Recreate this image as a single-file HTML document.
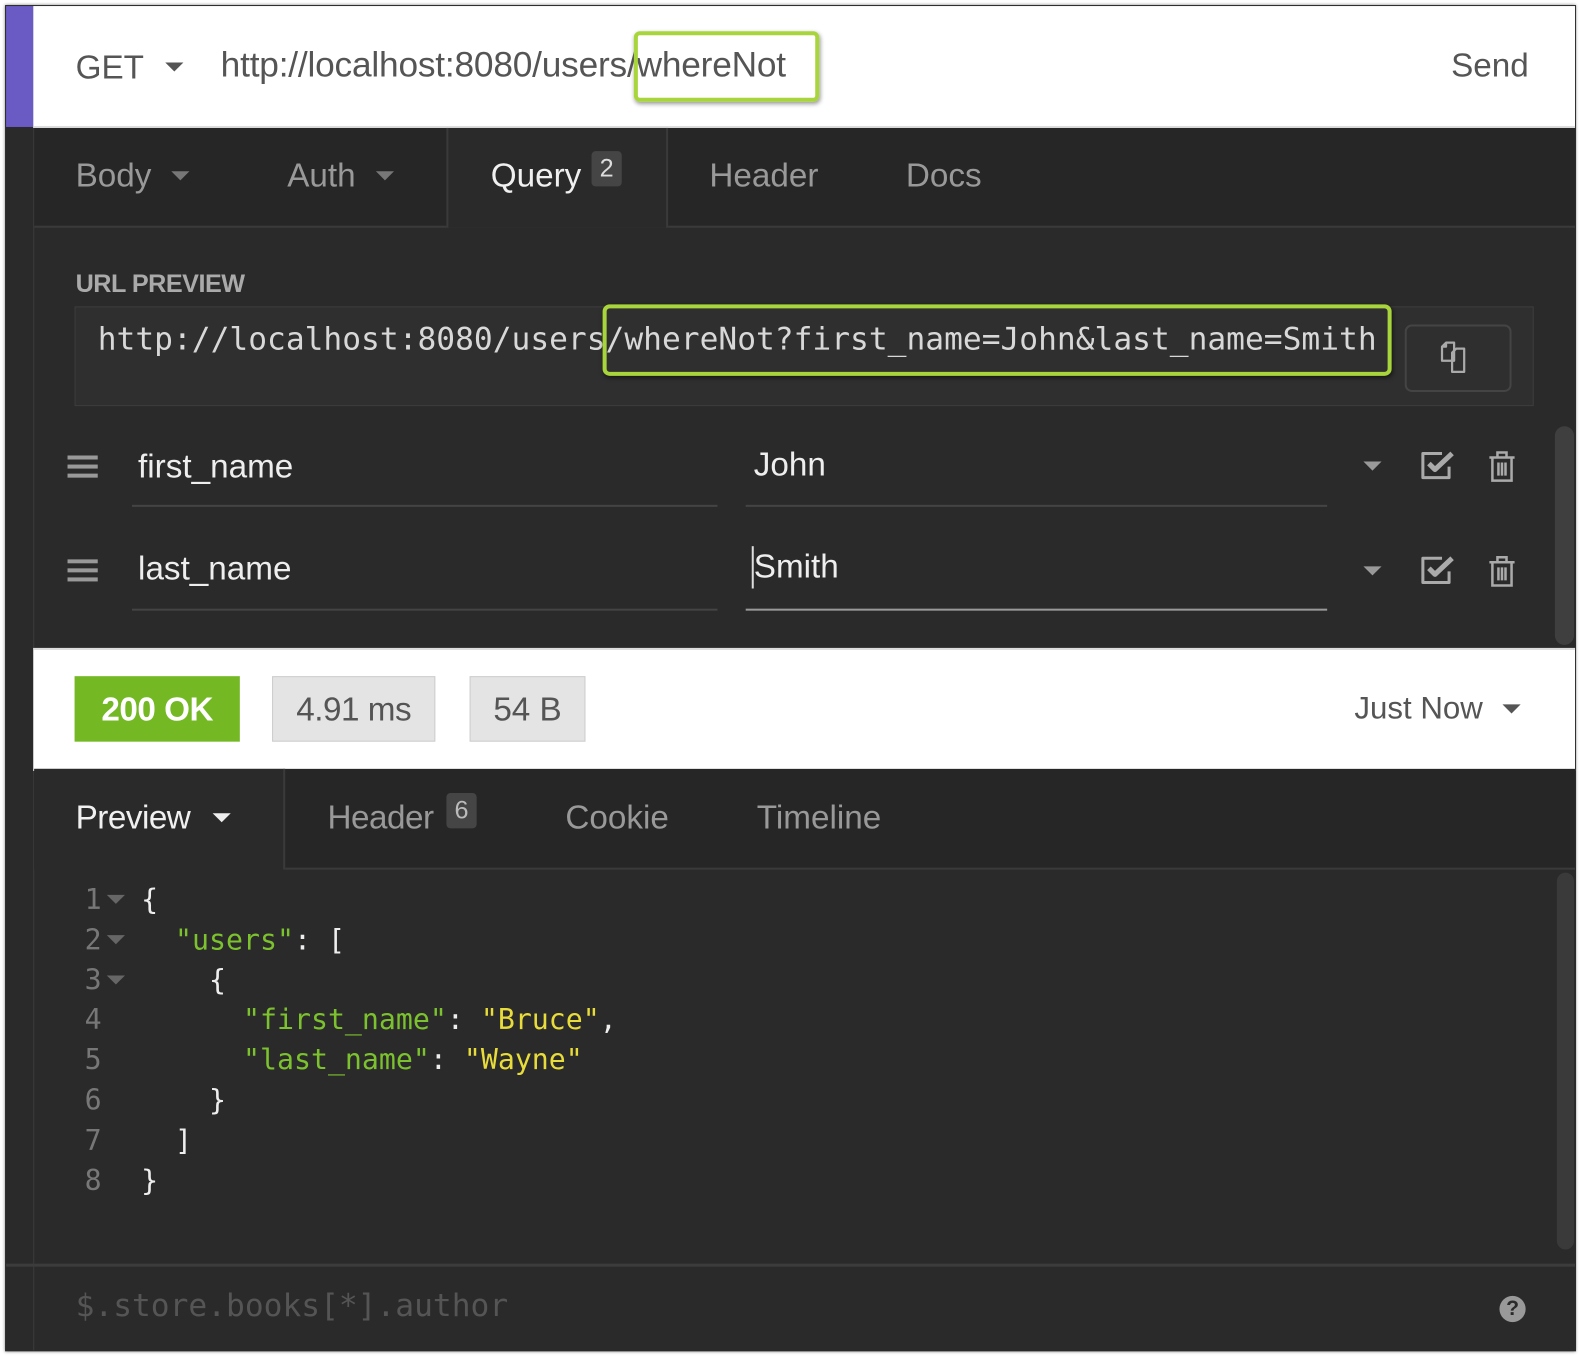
<!DOCTYPE html>
<html><head><meta charset="utf-8"><style>
html,body{margin:0;padding:0;background:#fff;width:1580px;height:1356px;overflow:hidden}
#w{position:absolute;left:0;top:0;width:1568px;height:1346px;transform:scale(1.0077);transform-origin:0 0;font-family:"Liberation Sans",Arial,sans-serif}
.a{position:absolute}
.m{font-family:"DejaVu Sans Mono","Liberation Mono",monospace;white-space:pre}
.t{white-space:nowrap}
.tri{position:absolute;width:0;height:0;border-left:9px solid transparent;border-right:9px solid transparent;border-top:9px solid #999}
</style></head><body><div id="w">
<!-- frame -->
<div class="a" style="left:5px;top:5px;width:1559px;height:1336px;background:#2a2a2a;box-shadow:0 0 3px rgba(0,0,0,.5)"></div>
<div class="a" style="left:6px;top:6px;width:27px;height:120px;background:#6a5ac4"></div>
<div class="a" style="left:33px;top:126px;width:1px;height:1214px;background:#3c3c3c"></div>
<!-- top bar -->
<div class="a" style="left:33px;top:6px;width:1530px;height:119px;background:#fff;border-bottom:2px solid #ddd"></div>
<div class="a t" style="left:75px;top:48px;font-size:33px;color:#555">GET</div>
<div class="tri" style="left:164px;top:62px;border-top-color:#555"></div>
<div class="a t" style="left:219px;top:45px;font-size:35px;color:#555;letter-spacing:-0.2px">http://localhost:8080/users/whereNot</div>
<div class="a" style="left:629px;top:31px;width:176px;height:62px;border:4px solid #a8d43c;border-radius:6px;box-shadow:1px 2px 4px rgba(0,0,0,.4)"></div>
<div class="a t" style="left:1440px;top:46px;font-size:33px;color:#555">Send</div>
<!-- tabs -->
<div class="a" style="left:34px;top:127px;width:1529px;height:98px;background:#262626"></div>
<div class="a" style="left:34px;top:224px;width:1529px;height:2px;background:#3a3a3a"></div>
<div class="a" style="left:443px;top:127px;width:216px;height:99px;background:#2a2a2a;border-left:2px solid #3a3a3a;border-right:2px solid #3a3a3a"></div>
<div class="a t" style="left:75px;top:155px;font-size:33px;color:#999">Body</div>
<div class="tri" style="left:170px;top:170px;border-top-color:#777"></div>
<div class="a t" style="left:285px;top:155px;font-size:33px;color:#999">Auth</div>
<div class="tri" style="left:373px;top:170px;border-top-color:#777"></div>
<div class="a t" style="left:487px;top:155px;font-size:33px;color:#f0f0f0">Query</div>
<div class="a" style="left:587px;top:150px;width:30px;height:35px;background:#454545;border-radius:4px;color:#ddd;font-size:25px;text-align:center;line-height:34px">2</div>
<div class="a t" style="left:704px;top:155px;font-size:33px;color:#999">Header</div>
<div class="a t" style="left:899px;top:155px;font-size:33px;color:#999">Docs</div>
<!-- URL preview -->
<div class="a t" style="left:75px;top:268px;font-size:25px;font-weight:bold;color:#aaa;letter-spacing:-0.5px">URL PREVIEW</div>
<div class="a" style="left:74px;top:304px;width:1446px;height:97px;background:#2f2f2f;border:1px solid #3d3d3d"></div>
<div class="a m" style="left:97px;top:319px;font-size:31px;color:#d8d8d8">http://localhost:8080/users/whereNot?first_name=John&amp;last_name=Smith</div>
<div class="a" style="left:598px;top:302px;width:775px;height:63px;border:4px solid #a8d43c;border-radius:7px;box-shadow:1px 2px 4px rgba(0,0,0,.5)"></div>
<div class="a" style="left:1394px;top:322px;width:102px;height:63px;border:2px solid #444;border-radius:7px"></div>
<svg class="a" style="left:1428px;top:338px" width="36" height="34" viewBox="0 0 36 34" fill="none" stroke="#aaa" stroke-width="2.2" stroke-linejoin="round"><path d="M3 6 L7 2 H15 V20 H3 Z M3 6 H7 V2"/><path d="M13 12 L17 8 H25 V31 H13 Z"/></svg>
<!-- params rows -->
<svg class="a" style="left:67px;top:452px" width="31" height="23"><rect y="0" width="30" height="4" fill="#999"/><rect y="9" width="30" height="4" fill="#999"/><rect y="18" width="30" height="4" fill="#999"/></svg>
<div class="a t" style="left:137px;top:444px;font-size:33px;color:#eee">first_name</div>
<div class="a" style="left:131px;top:501px;width:581px;height:2px;background:#444"></div>
<div class="a t" style="left:748px;top:442px;font-size:33px;color:#eee">John</div>
<div class="a" style="left:740px;top:501px;width:577px;height:2px;background:#444"></div>
<svg class="a" style="left:67px;top:555px" width="31" height="23"><rect y="0" width="30" height="4" fill="#999"/><rect y="9" width="30" height="4" fill="#999"/><rect y="18" width="30" height="4" fill="#999"/></svg>
<div class="a t" style="left:137px;top:545px;font-size:33px;color:#eee">last_name</div>
<div class="a" style="left:131px;top:604px;width:581px;height:2px;background:#444"></div>
<div class="a" style="left:746px;top:542px;width:2px;height:42px;background:#ddd"></div>
<div class="a t" style="left:748px;top:543px;font-size:33px;color:#eee">Smith</div>
<div class="a" style="left:740px;top:604px;width:577px;height:2px;background:#999"></div>
<div class="tri" style="left:1353px;top:458px"></div>
<div class="tri" style="left:1353px;top:562px"></div>
<svg class="a" style="left:1409px;top:446px" width="36" height="32" viewBox="0 0 36 32" fill="none" stroke="#aaa" stroke-width="3" stroke-linejoin="round"><path d="M29 17 V28 H3 V4 H22"/><path d="M9 14 L15 20 L32 4" stroke-width="5"/></svg>
<svg class="a" style="left:1409px;top:550px" width="36" height="32" viewBox="0 0 36 32" fill="none" stroke="#aaa" stroke-width="3" stroke-linejoin="round"><path d="M29 17 V28 H3 V4 H22"/><path d="M9 14 L15 20 L32 4" stroke-width="5"/></svg>
<svg class="a" style="left:1477px;top:447px" width="27" height="32" viewBox="0 0 27 32" fill="none" stroke="#aaa" stroke-width="2.5"><path d="M1 7 H26 M9 7 V2 H18 V7 M4 7 V30 H23 V7 M10 12 V25 M13.5 12 V25 M17 12 V25"/></svg>
<svg class="a" style="left:1477px;top:551px" width="27" height="32" viewBox="0 0 27 32" fill="none" stroke="#aaa" stroke-width="2.5"><path d="M1 7 H26 M9 7 V2 H18 V7 M4 7 V30 H23 V7 M10 12 V25 M13.5 12 V25 M17 12 V25"/></svg>
<div class="a" style="left:1543px;top:423px;width:19px;height:217px;background:#3f3f3f;border-radius:10px"></div>
<!-- response bar -->
<div class="a" style="left:33px;top:643px;width:1530px;height:118px;background:#fff;border-top:2px solid #ddd;border-bottom:2px solid #ddd"></div>
<div class="a" style="left:74px;top:671px;width:164px;height:65px;background:#74b824;color:#fff;font-size:33px;font-weight:bold;text-align:center;line-height:65px;letter-spacing:-0.5px">200 OK</div>
<div class="a" style="left:270px;top:671px;width:160px;height:63px;background:#e4e4e4;border:1px solid #ccc;color:#555;font-size:33px;text-align:center;line-height:63px;letter-spacing:-0.5px">4.91 ms</div>
<div class="a" style="left:466px;top:671px;width:113px;height:63px;background:#e4e4e4;border:1px solid #ccc;color:#555;font-size:33px;text-align:center;line-height:63px">54 B</div>
<div class="a t" style="left:1344px;top:685px;font-size:31px;color:#555">Just Now</div>
<div class="tri" style="left:1491px;top:699px;border-top-color:#555"></div>
<!-- response tabs -->
<div class="a" style="left:34px;top:763px;width:1529px;height:99px;background:#262626"></div>
<div class="a" style="left:281px;top:861px;width:1282px;height:2px;background:#3a3a3a"></div>
<div class="a" style="left:34px;top:763px;width:247px;height:100px;background:#2a2a2a;border-right:2px solid #3a3a3a"></div>
<div class="a t" style="left:75px;top:792px;font-size:33px;color:#f0f0f0;letter-spacing:-0.5px">Preview</div>
<div class="tri" style="left:211px;top:807px;border-top-color:#eee"></div>
<div class="a t" style="left:325px;top:792px;font-size:33px;color:#999;letter-spacing:-0.5px">Header</div>
<div class="a" style="left:443px;top:787px;width:30px;height:35px;background:#454545;border-radius:4px;color:#bbb;font-size:25px;text-align:center;line-height:34px">6</div>
<div class="a t" style="left:561px;top:792px;font-size:33px;color:#999">Cookie</div>
<div class="a t" style="left:751px;top:792px;font-size:33px;color:#999">Timeline</div>
<!-- code -->
<div class="a m" style="left:84px;top:873px;font-size:28px;line-height:39.8px;color:#777">1
2
3
4
5
6
7
8</div>
<div class="tri" style="left:106px;top:888px;border-top-color:#666"></div>
<div class="tri" style="left:106px;top:928px;border-top-color:#666"></div>
<div class="tri" style="left:106px;top:968px;border-top-color:#666"></div>
<div class="a m" style="left:140px;top:873px;font-size:28px;line-height:39.8px;color:#eee">{
  <span style="color:#7cc12e">"users"</span>: [
    {
      <span style="color:#7cc12e">"first_name"</span>: <span style="color:#e8dc3a">"Bruce"</span>,
      <span style="color:#7cc12e">"last_name"</span>: <span style="color:#e8dc3a">"Wayne"</span>
    }
  ]
}</div>
<div class="a" style="left:1545px;top:866px;width:17px;height:374px;background:#3a3a3a;border-radius:9px"></div>
<!-- footer -->
<div class="a" style="left:6px;top:1254px;width:1557px;height:3px;background:#3c3c3c"></div>
<div class="a m" style="left:75px;top:1278px;font-size:31px;color:#555">$.store.books[*].author</div>
<div class="a" style="left:1488px;top:1286px;width:26px;height:26px;border-radius:50%;background:#999;color:#2a2a2a;font-size:21px;font-weight:bold;text-align:center;line-height:26px">?</div>
</div></body></html>
